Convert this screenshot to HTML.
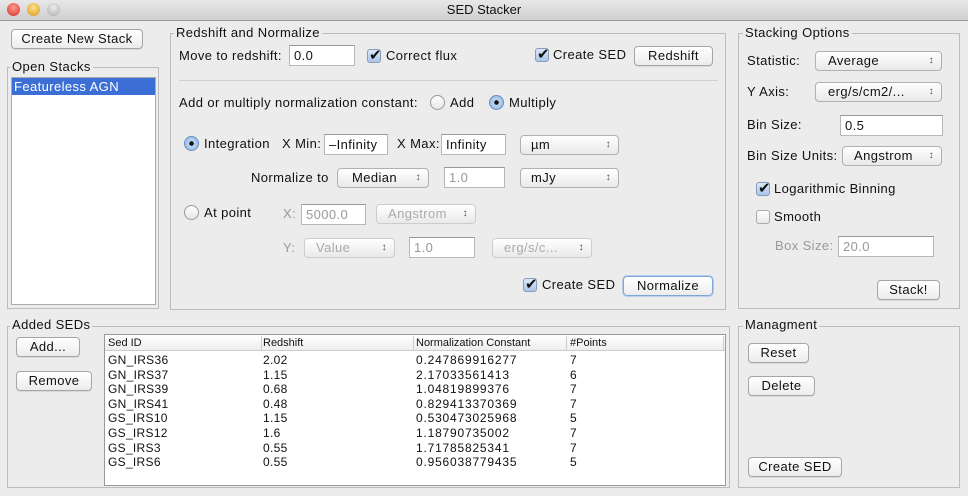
<!DOCTYPE html>
<html><head><meta charset="utf-8"><style>
*{box-sizing:border-box;margin:0;padding:0}
body{width:968px;height:496px;overflow:hidden;background:#ececec;font-family:"Liberation Sans",sans-serif;font-size:13px;color:#111;position:relative;letter-spacing:0.4px}
.a{position:absolute;white-space:nowrap}
.t{position:absolute;white-space:nowrap;line-height:16px}
.title{position:absolute;left:0;top:0;width:968px;height:21px;background:linear-gradient(#e8e8e8,#cfcfcf);border-bottom:1px solid #999;text-align:center;line-height:20px;font-size:13px;letter-spacing:0}
.dot{position:absolute;top:3px;width:13px;height:13px;border-radius:50%}
.grp{position:absolute;border:1px solid #bcbcbc}
.gl{position:absolute;background:#ececec;padding:0 2px;line-height:14px;white-space:nowrap}
.btn{position:absolute;height:20px;border:1px solid #a6a6a6;border-radius:4px;background:linear-gradient(#fff,#ececec);text-align:center;line-height:18px;box-shadow:0 1px 0 rgba(0,0,0,.08)}
.in{position:absolute;height:21px;background:#fff;border:1px solid #b8b8b8;border-top-color:#999;padding-left:4px;line-height:19px}
.dis{color:#999}
.cb{position:absolute;height:20px;border:1px solid #b0b0b0;border-radius:4px;background:linear-gradient(#fff,#e9e9e9);line-height:18px;padding-left:10px}
.cb:after{content:"\2195";position:absolute;right:7px;top:0;font-size:10px;color:#555}
.cb.dis{color:#aaa;border-color:#ccc}
.chk{position:absolute;width:14px;height:14px;border:1px solid #8a9bb8;border-radius:3px;background:linear-gradient(#dbe8f8,#a9c6ea)}
.chk.on:after{content:"\2714";position:absolute;left:1px;top:-4px;font-size:15px;color:#111}
.chk.off{background:linear-gradient(#fff,#e8e8e8);border-color:#aaa}
.rad{position:absolute;width:15px;height:15px;border-radius:50%;border:1px solid #999;background:linear-gradient(#fff,#e6e6e6)}
.rad.on{background:radial-gradient(circle,#111 0 2px,#bcd4f2 2.5px,#8db4e6);border-color:#6a8cbc}
.tbl{font-size:12px;letter-spacing:0.3px}
.hd{font-size:11px;line-height:14px;letter-spacing:0}
</style></head><body>
<div class="title">SED Stacker</div>
<div class="dot" style="left:7px;background:radial-gradient(circle at 50% 35%,#ff9a90,#d72c22)"></div>
<div class="dot" style="left:27px;background:radial-gradient(circle at 50% 35%,#ffe08a,#d89a1c)"></div>
<div class="dot" style="left:47px;background:radial-gradient(circle at 50% 35%,#eee,#aaa)"></div>

<div class="btn" style="left:11px;top:29px;width:132px">Create New Stack</div>
<div class="grp" style="left:7px;top:67px;width:152px;height:242px"></div>
<div class="gl" style="left:10px;top:60px">Open Stacks</div>
<div class="a" style="left:11px;top:77px;width:145px;height:228px;background:#fff;border:1px solid #aaa"></div>
<div class="a" style="left:12px;top:78px;width:143px;height:17px;background:#3b6fd6;color:#fff;padding-left:2px;line-height:17px">Featureless AGN</div>

<div class="grp" style="left:170px;top:33px;width:556px;height:277px"></div>
<div class="gl" style="left:174px;top:26px">Redshift and Normalize</div>
<div class="t" style="left:179px;top:48px">Move to redshift:</div>
<div class="in" style="left:289px;top:45px;width:66px">0.0</div>
<div class="chk on" style="left:367px;top:49px"></div>
<div class="t" style="left:386px;top:48px">Correct flux</div>
<div class="chk on" style="left:535px;top:48px"></div>
<div class="t" style="left:553px;top:47px">Create SED</div>
<div class="btn" style="left:634px;top:46px;width:79px">Redshift</div>
<div class="a" style="left:179px;top:80px;width:539px;height:1px;background:#d0d0d0"></div>
<div class="t" style="left:179px;top:95px">Add or multiply normalization constant:</div>
<div class="rad" style="left:430px;top:95px"></div>
<div class="t" style="left:450px;top:95px">Add</div>
<div class="rad on" style="left:489px;top:95px"></div>
<div class="t" style="left:509px;top:95px">Multiply</div>

<div class="rad on" style="left:184px;top:136px"></div>
<div class="t" style="left:204px;top:136px">Integration</div>
<div class="t" style="left:282px;top:136px">X Min:</div>
<div class="in" style="left:324px;top:134px;width:64px">–Infinity</div>
<div class="t" style="left:397px;top:136px">X Max:</div>
<div class="in" style="left:441px;top:134px;width:65px">Infinity</div>
<div class="cb" style="left:520px;top:135px;width:99px">µm</div>
<div class="t" style="left:251px;top:170px">Normalize to</div>
<div class="cb" style="left:337px;top:168px;width:92px;padding-left:14px">Median</div>
<div class="in dis" style="left:444px;top:167px;width:61px">1.0</div>
<div class="cb" style="left:520px;top:168px;width:99px">mJy</div>

<div class="rad" style="left:184px;top:205px"></div>
<div class="t" style="left:204px;top:205px">At point</div>
<div class="t dis" style="left:283px;top:206px">X:</div>
<div class="in dis" style="left:301px;top:204px;width:65px">5000.0</div>
<div class="cb dis" style="left:376px;top:204px;width:100px;padding-left:11px">Angstrom</div>
<div class="t dis" style="left:283px;top:240px">Y:</div>
<div class="cb dis" style="left:304px;top:238px;width:91px;padding-left:11px">Value</div>
<div class="in dis" style="left:409px;top:237px;width:66px">1.0</div>
<div class="cb dis" style="left:492px;top:238px;width:100px;padding-left:11px">erg/s/c...</div>
<div class="chk on" style="left:523px;top:278px"></div>
<div class="t" style="left:542px;top:277px">Create SED</div>
<div class="btn" style="left:623px;top:276px;width:90px;border-color:#7ea6d8;box-shadow:0 0 0 1px #b8d0ee">Normalize</div>

<div class="grp" style="left:738px;top:33px;width:222px;height:276px"></div>
<div class="gl" style="left:743px;top:26px">Stacking Options</div>
<div class="t" style="left:747px;top:53px">Statistic:</div>
<div class="cb" style="left:815px;top:51px;width:127px;padding-left:12px">Average</div>
<div class="t" style="left:747px;top:84px">Y Axis:</div>
<div class="cb" style="left:815px;top:82px;width:127px;padding-left:12px">erg/s/cm2/...</div>
<div class="t" style="left:747px;top:117px">Bin Size:</div>
<div class="in" style="left:840px;top:115px;width:103px">0.5</div>
<div class="t" style="left:747px;top:148px">Bin Size Units:</div>
<div class="cb" style="left:842px;top:146px;width:100px;padding-left:11px">Angstrom</div>
<div class="chk on" style="left:756px;top:182px"></div>
<div class="t" style="left:774px;top:181px">Logarithmic Binning</div>
<div class="chk off" style="left:756px;top:210px"></div>
<div class="t" style="left:774px;top:209px">Smooth</div>
<div class="t dis" style="left:775px;top:238px">Box Size:</div>
<div class="in dis" style="left:838px;top:236px;width:96px">20.0</div>
<div class="btn" style="left:877px;top:280px;width:63px">Stack!</div>

<div class="grp" style="left:7px;top:326px;width:723px;height:162px"></div>
<div class="gl" style="left:10px;top:318px">Added SEDs</div>
<div class="btn" style="left:16px;top:337px;width:64px">Add...</div>
<div class="btn" style="left:16px;top:371px;width:76px">Remove</div>
<div class="a" style="left:104px;top:334px;width:622px;height:152px;background:#fff;border:1px solid #999"></div>
<div class="a" style="left:105px;top:335px;width:620px;height:16px;background:linear-gradient(#fff,#eee);border-bottom:1px solid #ccc"></div>
<div class="a" style="left:261px;top:336px;width:1px;height:14px;background:#ccc"></div>
<div class="a" style="left:413px;top:336px;width:1px;height:14px;background:#ccc"></div>
<div class="a" style="left:566px;top:336px;width:1px;height:14px;background:#ccc"></div>
<div class="a" style="left:723px;top:336px;width:1px;height:14px;background:#ccc"></div>
<div class="a hd" style="left:108px;top:336px">Sed ID</div>
<div class="a hd" style="left:263px;top:336px">Redshift</div>
<div class="a hd" style="left:416px;top:336px">Normalization Constant</div>
<div class="a hd" style="left:570px;top:336px">#Points</div>
<div class="a tbl" style="left:108px;top:353px;line-height:14.6px">GN_IRS36<br>GN_IRS37<br>GN_IRS39<br>GN_IRS41<br>GS_IRS10<br>GS_IRS12<br>GS_IRS3<br>GS_IRS6</div>
<div class="a tbl" style="left:263px;top:353px;line-height:14.6px">2.02<br>1.15<br>0.68<br>0.48<br>1.15<br>1.6<br>0.55<br>0.55</div>
<div class="a tbl" style="left:416px;top:353px;line-height:14.6px;letter-spacing:0.8px">0.247869916277<br>2.17033561413<br>1.04819899376<br>0.829413370369<br>0.530473025968<br>1.18790735002<br>1.71785825341<br>0.956038779435</div>
<div class="a tbl" style="left:570px;top:353px;line-height:14.6px">7<br>6<br>7<br>7<br>5<br>7<br>7<br>5</div>

<div class="grp" style="left:738px;top:326px;width:222px;height:162px"></div>
<div class="gl" style="left:743px;top:318px">Managment</div>
<div class="btn" style="left:748px;top:343px;width:61px">Reset</div>
<div class="btn" style="left:748px;top:376px;width:67px">Delete</div>
<div class="btn" style="left:748px;top:457px;width:94px">Create SED</div>
</body></html>
